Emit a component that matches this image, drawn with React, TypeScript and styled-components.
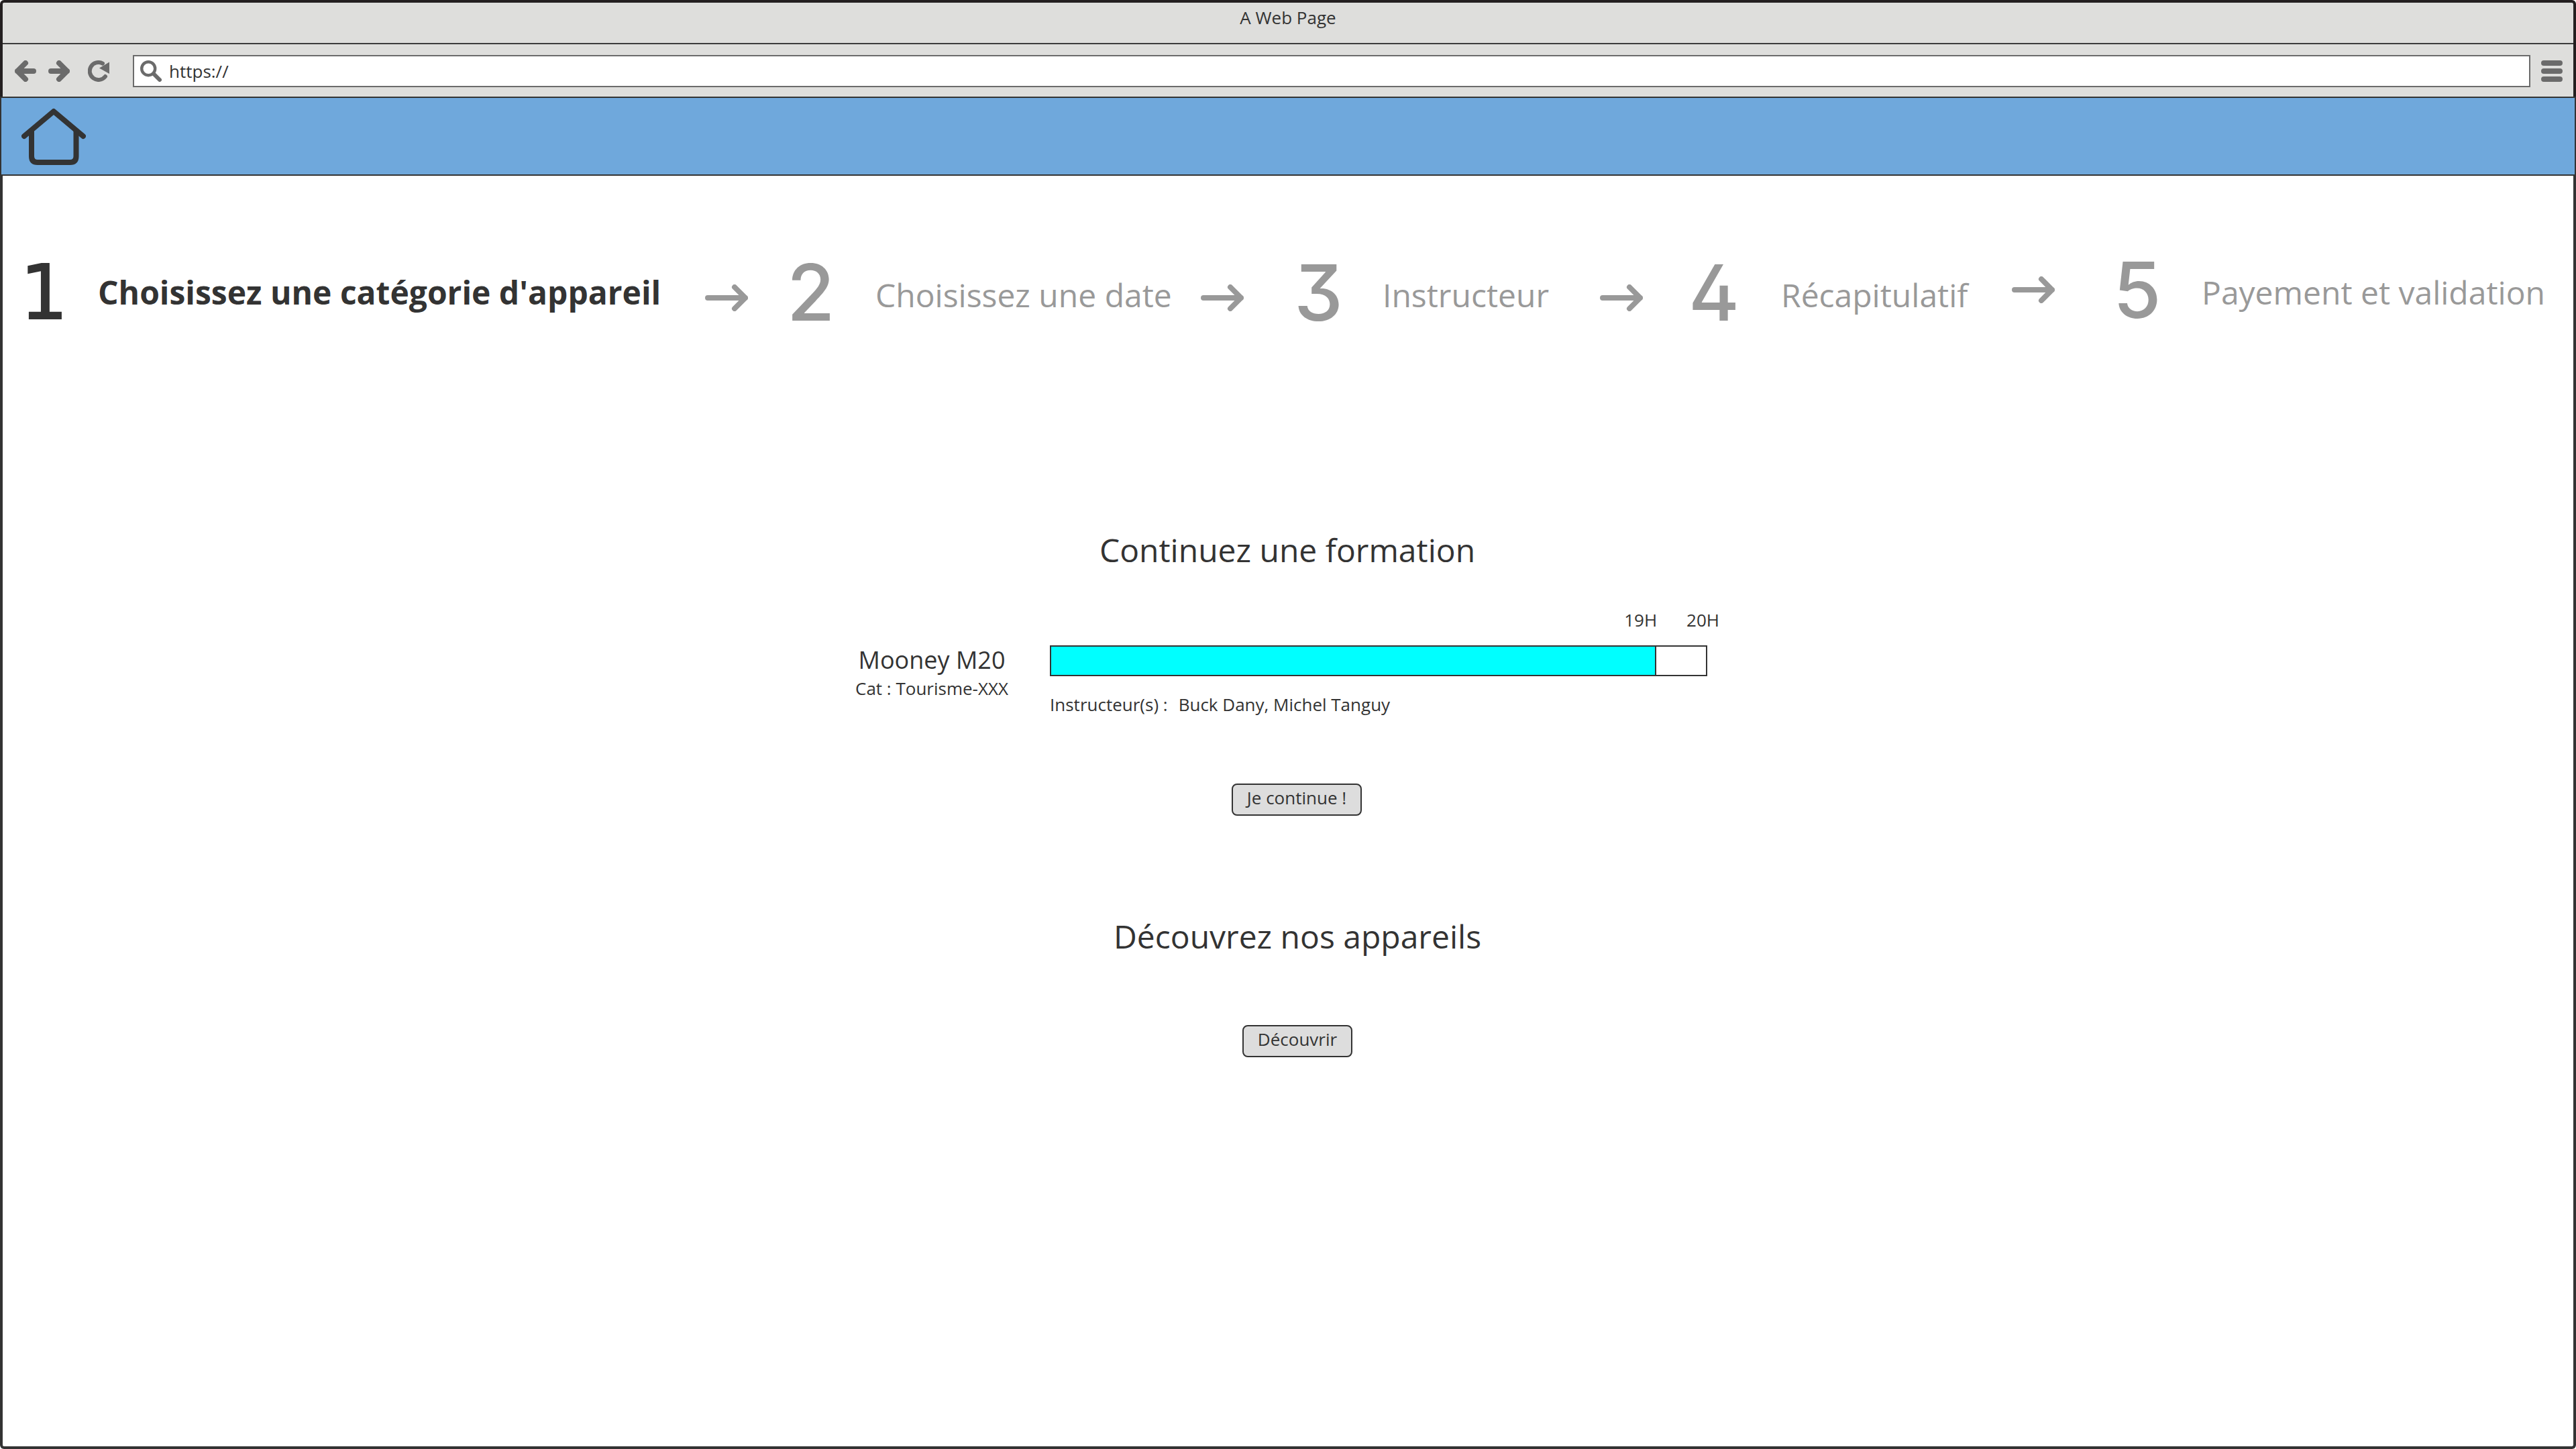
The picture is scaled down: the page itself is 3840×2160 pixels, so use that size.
import React from "react";
import styled, { createGlobalStyle } from "styled-components";

const ink = "#333333";
const muted = "#999999";
const chrome = "#dededc";
const control = "#6b6b6b";

const GlobalStyle = createGlobalStyle`
  *, *::before, *::after { box-sizing: border-box; }
  body {
    margin: 0;
    background: #ffffff;
    color: ${ink};
    font-family: "Open Sans", "Noto Sans", sans-serif;
    font-size: 26px;
    line-height: 36px;
  }
  h1, h2, p, ol { margin: 0; padding: 0; }
`;

const Window = styled.div`
  display: flex;
  flex-direction: column;
  min-height: 100vh;
`;

const BrowserChrome = styled.div`
  background: ${chrome};
  border: 4px solid #231f20;
  border-bottom: 0;
  border-radius: 6px 6px 0 0;
`;

const TitleBar = styled.div`
  height: 62px;
  padding-top: 4px;
  border-bottom: 2px solid #3c3c3c;
  text-align: center;
`;

const Toolbar = styled.div`
  display: flex;
  align-items: center;
  padding: 16px 16px 14px 18px;
`;

const NavGroup = styled.div`
  display: flex;
  gap: 18px;
  margin-right: 27px;
`;

const IconButton = styled.button`
  display: block;
  padding: 0;
  border: 0;
  background: none;
  color: ${control};
  cursor: pointer;

  svg { display: block; }
`;

const AddressBar = styled.label`
  flex: 1;
  display: flex;
  align-items: center;
  gap: 11px;
  height: 48px;
  margin: 0 16px 0 35px;
  padding-left: 9px;
  border: 2px solid ${control};
  background: #ffffff;
  color: ${control};
`;

const AddressInput = styled.input`
  flex: 1;
  min-width: 0;
  padding: 0;
  border: 0;
  outline: 0;
  background: none;
  color: ${ink};
  font: inherit;
`;

const SiteHeader = styled.header`
  display: flex;
  align-items: center;
  height: 118px;
  padding-left: 30px;
  border: 2px solid ${ink};
  background: #6fa8dc;
`;

const HomeLink = styled.a`
  display: block;
  color: ${ink};

  svg { display: block; }
`;

const Main = styled.main`
  flex: 1;
  padding: 130px 40px 96px 26px;
  border: 4px solid ${ink};
  border-top: 0;
  border-radius: 0 0 6px 6px;
`;

const Steps = styled.ol`
  display: grid;
  grid-template-columns: 1143fr 756fr 588fr 633fr 646fr;
  list-style: none;
`;

const Step = styled.li<{ $current?: boolean }>`
  display: flex;
  align-items: flex-start;
  color: ${(p) => (p.$current ? ink : muted)};
  font-weight: ${(p) => (p.$current ? 700 : 400)};
`;

/* Vertical levels of the step row, 4px apart */
const StepPart = styled.span<{ $level: number }>`
  display: flex;
  align-items: center;
  height: 80px;
  margin-top: ${(p) => p.$level * 4}px;
`;

const StepNumber = styled(StepPart)<{ $width: number; $slab?: boolean }>`
  flex: none;
  width: ${(p) => p.$width}px;
  font-family: ${(p) => (p.$slab ? '"DejaVu Sans"' : 'Inter, "DejaVu Sans"')}, sans-serif;
  font-size: ${(p) => (p.$slab ? 112 : 116)}px;
  font-weight: ${(p) => (p.$slab ? 400 : 500)};
  font-feature-settings: "cv02", "cv09";
  -webkit-text-stroke: ${(p) => (p.$slab ? 2 : 0)}px currentColor;
`;

const StepLabel = styled(StepPart)`
  flex: none;
  font-size: 48px;
  white-space: nowrap;
`;

const StepArrow = styled(StepPart)<{ $trail: number }>`
  flex: 1;
  justify-content: center;
  padding-left: 8px;
  padding-right: ${(p) => p.$trail}px;
  color: ${muted};
`;

const Section = styled.section`
  display: flex;
  flex-direction: column;
  align-items: center;
`;

const TrainingSection = styled(Section)`
  margin-top: 304px;
`;

const DiscoverSection = styled(Section)`
  margin-top: 148px;
  padding-left: 30px;
`;

const Heading = styled.h2`
  font-size: 48px;
  font-weight: 400;
  line-height: 64px;
`;

const Training = styled.div`
  display: flex;
  align-items: flex-end;
  gap: 62px;
  width: 100%;
  max-width: 1288px;
  margin-top: 54px;
`;

const Aircraft = styled.div`
  flex: none;
  padding-bottom: 24px;
  text-align: center;
`;

const AircraftName = styled.h3`
  margin: 0;
  font-size: 36px;
  font-weight: 400;
  line-height: 48px;
`;

const Progress = styled.div`
  flex: 1;
`;

const Hours = styled.div`
  display: flex;
  justify-content: flex-end;
  gap: 44px;
`;

const Track = styled.div`
  height: 46px;
  margin: 20px 18px 24px 0;
  border: 2px solid ${ink};
  background: #ffffff;
`;

const Fill = styled.div`
  height: 100%;
  border-right: 2px solid ${ink};
  background: #00ffff;
`;

const Instructors = styled.p`
  display: flex;
  gap: 16px;
`;

const Action = styled.div`
  margin-top: 100px;
`;

const OffsetAction = styled(Action)`
  padding-left: 28px;
`;

const Button = styled.button`
  display: block;
  height: 48px;
  padding: 0 21px 6px;
  border: 2px solid ${ink};
  border-radius: 8px;
  background: #dddddd;
  color: ${ink};
  font: inherit;
  cursor: pointer;
`;

const Content = styled.div`
  padding-left: 12px;
`;

const ArrowLine = ({ flip }: { flip?: boolean }) => (
  <svg width="32" height="32" viewBox="0 0 32 32" fill="none" stroke="currentColor" strokeWidth="8" strokeLinecap="round" strokeLinejoin="round">
    <path d={flip ? "M16 4 28 16 16 28M4 16H28" : "M16 4 4 16 16 28M28 16H4"} />
  </svg>
);

const ReloadIcon = () => (
  <svg width="32" height="32" viewBox="0 0 32 32" fill="none" stroke="currentColor" strokeWidth="6" strokeLinecap="round">
    <path d="M22 4.6A13 13 0 1 0 26 24" />
    <path d="M32 2.5V20L17 11.5Z" fill="currentColor" stroke="none" />
  </svg>
);

const SearchIcon = () => (
  <svg width="32" height="32" viewBox="0 0 32 32" fill="none" stroke="currentColor" strokeLinecap="round">
    <circle cx="12.2" cy="12.2" r="10" strokeWidth="4.4" />
    <path d="M20.5 20.5 29 29" strokeWidth="6" />
  </svg>
);

const MenuIcon = () => (
  <svg width="32" height="32" viewBox="0 0 32 32" fill="none" stroke="currentColor" strokeWidth="8" strokeLinecap="round">
    <path d="M4 4H28M4 16H28M4 28H28" />
  </svg>
);

const HomeIcon = () => (
  <svg width="96" height="96" viewBox="0 0 96 96" fill="none" stroke="currentColor" strokeWidth="8" strokeLinecap="round" strokeLinejoin="round">
    <path d="M4 48 48 11 92 48" />
    <path d="M15 40V78Q15 87 24 87H72.5Q81.5 87 81.5 78V40" />
  </svg>
);

const NextIcon = () => (
  <svg width="64" height="40" viewBox="0 0 64 40" fill="none" stroke="currentColor" strokeWidth="8" strokeLinecap="round" strokeLinejoin="round">
    <path d="M4 20H60M44 4 60 20 44 36" />
  </svg>
);

type StepData = {
  label: string;
  current?: boolean;
  numberWidth: number;
  levels: [number, number, number];
  trail?: number;
};

const steps: StepData[] = [
  { label: "Choisissez une catégorie d'appareil", current: true, numberWidth: 116, levels: [1, 1, 3], trail: 0 },
  { label: "Choisissez une date", numberWidth: 132, levels: [1, 2, 3], trail: 40 },
  { label: "Instructeur", numberWidth: 132, levels: [1, 2, 3], trail: 0 },
  { label: "Récapitulatif", numberWidth: 138, levels: [1, 2, 0], trail: 30 },
  { label: "Payement et validation", numberWidth: 132, levels: [0, 1, 0] },
];

export default function App() {
  const progress = 92.4;

  return (
    <Window>
      <GlobalStyle />
      <BrowserChrome>
        <TitleBar>A Web Page</TitleBar>
        <Toolbar>
          <NavGroup>
            <IconButton aria-label="Précédent"><ArrowLine /></IconButton>
            <IconButton aria-label="Suivant"><ArrowLine flip /></IconButton>
          </NavGroup>
          <IconButton aria-label="Recharger"><ReloadIcon /></IconButton>
          <AddressBar>
            <SearchIcon />
            <AddressInput type="text" aria-label="Adresse" defaultValue="https://" />
          </AddressBar>
          <IconButton aria-label="Menu"><MenuIcon /></IconButton>
        </Toolbar>
      </BrowserChrome>

      <SiteHeader>
        <HomeLink href="#" aria-label="Accueil"><HomeIcon /></HomeLink>
      </SiteHeader>

      <Main>
        <Steps>
          {steps.map((step, i) => (
            <Step key={step.label} $current={step.current} aria-current={step.current ? "step" : undefined}>
              <StepNumber $level={step.levels[0]} $width={step.numberWidth} $slab={step.current}>{i + 1}</StepNumber>
              <StepLabel $level={step.levels[1]}>{step.label}</StepLabel>
              {step.trail !== undefined && (
                <StepArrow $level={step.levels[2]} $trail={step.trail}><NextIcon /></StepArrow>
              )}
            </Step>
          ))}
        </Steps>

        <Content>
          <TrainingSection>
            <Heading>Continuez une formation</Heading>
            <Training>
              <Aircraft>
                <AircraftName>Mooney M20</AircraftName>
                <p>Cat : Tourisme-XXX</p>
              </Aircraft>
              <Progress>
                <Hours>
                  <span>19H</span>
                  <span>20H</span>
                </Hours>
                <Track role="progressbar" aria-label="Heures de formation" aria-valuemin={0} aria-valuemax={20} aria-valuenow={19}>
                  <Fill style={{ width: `${progress}%` }} />
                </Track>
                <Instructors>
                  <span>Instructeur(s) :</span>
                  <span>Buck Dany, Michel Tanguy</span>
                </Instructors>
              </Progress>
            </Training>
            <OffsetAction>
              <Button>Je continue !</Button>
            </OffsetAction>
          </TrainingSection>

          <DiscoverSection>
            <Heading>Découvrez nos appareils</Heading>
            <Action>
              <Button>Découvrir</Button>
            </Action>
          </DiscoverSection>
        </Content>
      </Main>
    </Window>
  );
}
